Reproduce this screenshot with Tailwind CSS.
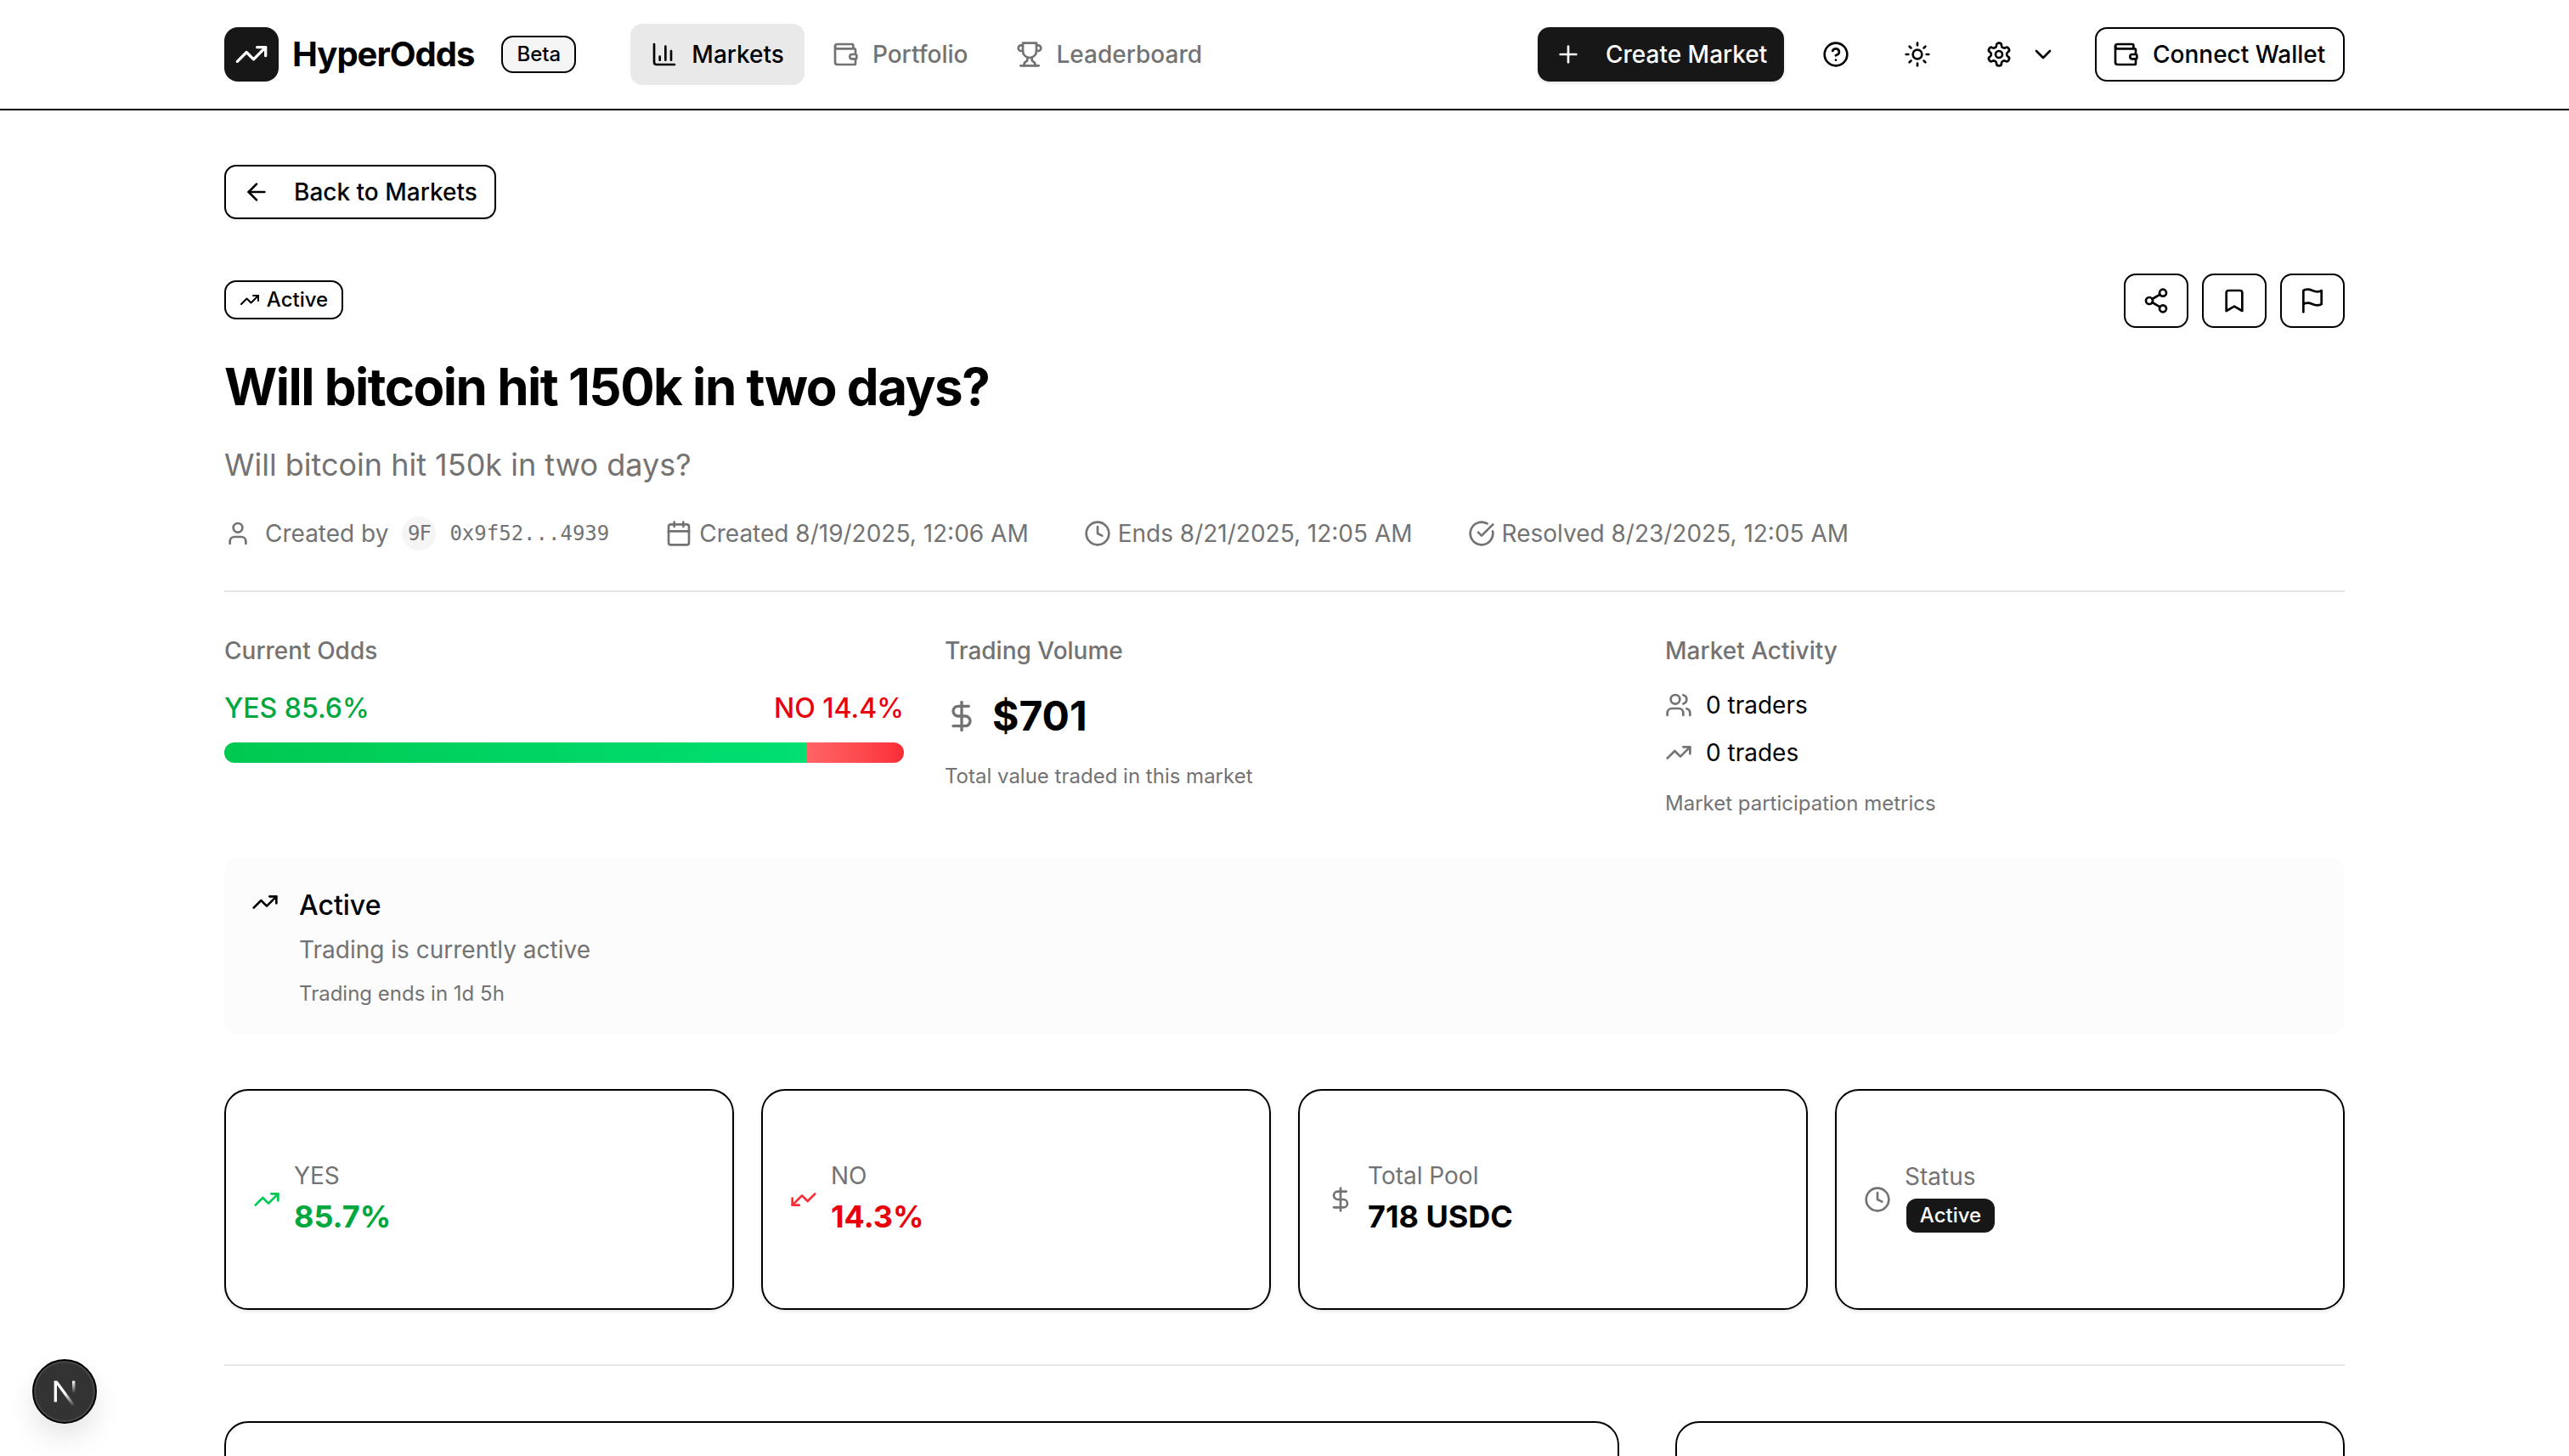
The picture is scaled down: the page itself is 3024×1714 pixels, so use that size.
<!doctype html>
<html>
<head>
<meta charset="utf-8">
<script src="https://cdn.jsdelivr.net/npm/@tailwindcss/browser@4"></script>
</head>
<body>
<div class="h-[1714px] overflow-hidden bg-white text-[28px] leading-[40px] text-black font-[Inter,sans-serif]">
  <header class="h-[130px] border-b-2 border-black">
    <div class="w-[2496px] h-[128px] mx-auto flex items-center">
      <div class="w-[64px] h-[64px] rounded-[16px] bg-[#171717] flex items-center justify-center">
        <svg class="w-[40px] h-[40px]" viewBox="0 0 24 24" fill="none" stroke="#fff" stroke-width="2" stroke-linecap="round" stroke-linejoin="round"><polyline points="22 7 13.5 15.5 8.5 10.5 2 17"/><polyline points="16 7 22 7 22 13"/></svg>
      </div>
      <span class="ml-[16px] text-[40px] leading-[56px] font-bold tracking-[-1px]">HyperOdds</span>
      <span class="ml-[32px] h-[44px] w-[88px] rounded-[14px] border-2 border-black bg-[#f5f5f5] flex items-center justify-center text-[24px] font-medium">Beta</span>
      <nav class="ml-[64px] flex items-center gap-[8px]">
        <a class="h-[72px] px-[24px] rounded-[14px] bg-[#e9e9e9] flex items-center gap-[16px] font-medium">
          <svg class="w-[32px] h-[32px]" viewBox="0 0 24 24" fill="none" stroke="currentColor" stroke-width="2" stroke-linecap="round" stroke-linejoin="round"><path d="M3 3v16a2 2 0 0 0 2 2h16"/><path d="M18 17V9"/><path d="M13 17V5"/><path d="M8 17v-3"/></svg>Markets</a>
        <a class="h-[72px] px-[24px] rounded-[14px] flex items-center gap-[16px] font-medium text-[#737373]">
          <svg class="w-[32px] h-[32px]" viewBox="0 0 24 24" fill="none" stroke="currentColor" stroke-width="2" stroke-linecap="round" stroke-linejoin="round"><path d="M19 7V4a1 1 0 0 0-1-1H5a2 2 0 0 0 0 4h15a1 1 0 0 1 1 1v4h-3a2 2 0 0 0 0 4h3a1 1 0 0 0 1-1v-2a1 1 0 0 0-1-1"/><path d="M3 5v14a2 2 0 0 0 2 2h15a1 1 0 0 0 1-1v-4"/></svg>Portfolio</a>
        <a class="h-[72px] px-[24px] rounded-[14px] flex items-center gap-[16px] font-medium text-[#737373]">
          <svg class="w-[32px] h-[32px]" viewBox="0 0 24 24" fill="none" stroke="currentColor" stroke-width="2" stroke-linecap="round" stroke-linejoin="round"><path d="M6 9H4.5a2.5 2.5 0 0 1 0-5H6"/><path d="M18 9h1.5a2.5 2.5 0 0 0 0-5H18"/><path d="M4 22h16"/><path d="M10 14.66V17c0 .55-.47.98-.97 1.21C7.85 18.75 7 20.24 7 22"/><path d="M14 14.66V17c0 .55.47.98.97 1.21C16.15 18.75 17 20.24 17 22"/><path d="M18 2H6v7a6 6 0 0 0 12 0V2Z"/></svg>Leaderboard</a>
      </nav>
      <div class="ml-auto flex items-center">
        <button class="h-[64px] w-[290px] rounded-[14px] bg-[#171717] text-white font-medium flex items-center gap-[28px] pl-[20px] shadow-[0_2px_4px_rgba(0,0,0,0.1)]">
          <svg class="w-[32px] h-[32px]" viewBox="0 0 24 24" fill="none" stroke="currentColor" stroke-width="2" stroke-linecap="round" stroke-linejoin="round"><path d="M5 12h14"/><path d="M12 5v14"/></svg>Create Market</button>
        <svg class="ml-[45px] w-[32px] h-[32px]" viewBox="0 0 24 24" fill="none" stroke="currentColor" stroke-width="2" stroke-linecap="round" stroke-linejoin="round"><circle cx="12" cy="12" r="10"/><path d="M9.09 9a3 3 0 0 1 5.83 1c0 2-3 3-3 3"/><path d="M12 17h.01"/></svg>
        <svg class="ml-[64px] w-[32px] h-[32px]" viewBox="0 0 24 24" fill="none" stroke="currentColor" stroke-width="2" stroke-linecap="round" stroke-linejoin="round"><circle cx="12" cy="12" r="4"/><path d="M12 2v2"/><path d="M12 20v2"/><path d="m4.93 4.93 1.41 1.41"/><path d="m17.66 17.66 1.41 1.41"/><path d="M2 12h2"/><path d="M20 12h2"/><path d="m6.34 17.66-1.41 1.41"/><path d="m19.07 4.93-1.41 1.41"/></svg>
        <svg class="ml-[64px] w-[32px] h-[32px]" viewBox="0 0 24 24" fill="none" stroke="currentColor" stroke-width="2" stroke-linecap="round" stroke-linejoin="round"><path d="M12.22 2h-.44a2 2 0 0 0-2 2v.18a2 2 0 0 1-1 1.73l-.43.25a2 2 0 0 1-2 0l-.15-.08a2 2 0 0 0-2.73.73l-.22.38a2 2 0 0 0 .73 2.73l.15.1a2 2 0 0 1 1 1.72v.51a2 2 0 0 1-1 1.74l-.15.09a2 2 0 0 0-.73 2.73l.22.38a2 2 0 0 0 2.73.73l.15-.08a2 2 0 0 1 2 0l.43.25a2 2 0 0 1 1 1.73V20a2 2 0 0 0 2 2h.44a2 2 0 0 0 2-2v-.18a2 2 0 0 1 1-1.73l.43-.25a2 2 0 0 1 2 0l.15.08a2 2 0 0 0 2.73-.73l.22-.39a2 2 0 0 0-.73-2.73l-.15-.08a2 2 0 0 1-1-1.74v-.5a2 2 0 0 1 1-1.74l.15-.09a2 2 0 0 0 .73-2.73l-.22-.38a2 2 0 0 0-2.73-.73l-.15.08a2 2 0 0 1-2 0l-.43-.25a2 2 0 0 1-1-1.73V4a2 2 0 0 0-2-2z"/><circle cx="12" cy="12" r="3"/></svg>
        <svg class="ml-[20px] w-[32px] h-[32px]" viewBox="0 0 24 24" fill="none" stroke="currentColor" stroke-width="2" stroke-linecap="round" stroke-linejoin="round"><path d="m6 9 6 6 6-6"/></svg>
        <button class="ml-[45px] h-[64px] w-[294px] rounded-[14px] border-2 border-black font-medium flex items-center gap-[16px] pl-[18px] shadow-[0_2px_4px_rgba(0,0,0,0.06)]">
          <svg class="w-[32px] h-[32px]" viewBox="0 0 24 24" fill="none" stroke="currentColor" stroke-width="2" stroke-linecap="round" stroke-linejoin="round"><path d="M19 7V4a1 1 0 0 0-1-1H5a2 2 0 0 0 0 4h15a1 1 0 0 1 1 1v4h-3a2 2 0 0 0 0 4h3a1 1 0 0 0 1-1v-2a1 1 0 0 0-1-1"/><path d="M3 5v14a2 2 0 0 0 2 2h15a1 1 0 0 0 1-1v-4"/></svg>Connect Wallet</button>
      </div>
    </div>
  </header>

  <main class="w-[2496px] mx-auto pt-[64px]">
    <button class="h-[64px] w-[320px] rounded-[14px] border-2 border-black font-medium flex items-center gap-[28px] pl-[20px] shadow-[0_2px_4px_rgba(0,0,0,0.06)]">
      <svg class="w-[32px] h-[32px]" viewBox="0 0 24 24" fill="none" stroke="currentColor" stroke-width="2" stroke-linecap="round" stroke-linejoin="round"><path d="m12 19-7-7 7-7"/><path d="M19 12H5"/></svg>Back to Markets</button>

    <div class="mt-[64px] flex justify-between items-start">
      <div class="mt-[8px] h-[46px] w-[140px] rounded-[14px] border-2 border-black flex items-center justify-center gap-[8px] text-[24px] leading-[46px] font-medium">
        <svg class="w-[24px] h-[24px]" viewBox="0 0 24 24" fill="none" stroke="currentColor" stroke-width="2" stroke-linecap="round" stroke-linejoin="round"><polyline points="22 7 13.5 15.5 8.5 10.5 2 17"/><polyline points="16 7 22 7 22 13"/></svg>Active</div>
      <div class="flex gap-[16px]">
        <button class="w-[76px] h-[64px] rounded-[14px] border-2 border-black flex items-center justify-center"><svg class="w-[32px] h-[32px]" viewBox="0 0 24 24" fill="none" stroke="currentColor" stroke-width="2" stroke-linecap="round" stroke-linejoin="round"><circle cx="18" cy="5" r="3"/><circle cx="6" cy="12" r="3"/><circle cx="18" cy="19" r="3"/><line x1="8.59" x2="15.42" y1="13.51" y2="17.49"/><line x1="15.41" x2="8.59" y1="6.51" y2="10.49"/></svg></button>
        <button class="w-[76px] h-[64px] rounded-[14px] border-2 border-black flex items-center justify-center"><svg class="w-[32px] h-[32px]" viewBox="0 0 24 24" fill="none" stroke="currentColor" stroke-width="2" stroke-linecap="round" stroke-linejoin="round"><path d="m19 21-7-4-7 4V5a2 2 0 0 1 2-2h10a2 2 0 0 1 2 2v16z"/></svg></button>
        <button class="w-[76px] h-[64px] rounded-[14px] border-2 border-black flex items-center justify-center"><svg class="w-[32px] h-[32px]" viewBox="0 0 24 24" fill="none" stroke="currentColor" stroke-width="2" stroke-linecap="round" stroke-linejoin="round"><path d="M4 15s1-1 4-1 5 2 8 2 4-1 4-1V3s-1 1-4 1-5-2-8-2-4 1-4 1z"/><line x1="4" x2="4" y1="22" y2="15"/></svg></button>
      </div>
    </div>

    <h1 class="mt-[33px] text-[60px] leading-[72px] font-bold tracking-[-1.5px]">Will bitcoin hit 150k in two days?</h1>
    <p class="mt-[28px] text-[36px] leading-[56px] text-[#737373]">Will bitcoin hit 150k in two days?</p>

    <div class="mt-[33px] h-[40px] flex items-center text-[#737373]">
      <svg class="w-[32px] h-[32px]" viewBox="0 0 24 24" fill="none" stroke="currentColor" stroke-width="2" stroke-linecap="round" stroke-linejoin="round"><path d="M19 21v-2a4 4 0 0 0-4-4H9a4 4 0 0 0-4 4v2"/><circle cx="12" cy="7" r="4"/></svg>
      <span class="ml-[16px]">Created by</span>
      <span class="ml-[16px] w-[40px] h-[40px] rounded-full bg-[#f5f5f5] flex items-center justify-center text-[24px] font-['DejaVu_Sans_Mono',monospace] tracking-[-1px]">9F</span>
      <span class="ml-[16px] text-[24px] font-['DejaVu_Sans_Mono',monospace]">0x9f52...4939</span>
      <svg class="ml-[66px] w-[32px] h-[32px]" viewBox="0 0 24 24" fill="none" stroke="currentColor" stroke-width="2" stroke-linecap="round" stroke-linejoin="round"><path d="M8 2v4"/><path d="M16 2v4"/><rect width="18" height="18" x="3" y="4" rx="2"/><path d="M3 10h18"/></svg>
      <span class="ml-[8px]">Created 8/19/2025, 12:06 AM</span>
      <svg class="ml-[65px] w-[32px] h-[32px]" viewBox="0 0 24 24" fill="none" stroke="currentColor" stroke-width="2" stroke-linecap="round" stroke-linejoin="round"><circle cx="12" cy="12" r="10"/><polyline points="12 6 12 12 16 14"/></svg>
      <span class="ml-[8px]">Ends 8/21/2025, 12:05 AM</span>
      <svg class="ml-[65px] w-[32px] h-[32px]" viewBox="0 0 24 24" fill="none" stroke="currentColor" stroke-width="2" stroke-linecap="round" stroke-linejoin="round"><path d="M21.801 10A10 10 0 1 1 17 3.335"/><path d="m9 11 3 3L22 4"/></svg>
      <span class="ml-[8px]">Resolved 8/23/2025, 12:05 AM</span>
    </div>

    <div class="mt-[47px] h-[2px] bg-[#e5e5e5]"></div>

    <div class="mt-[49px] grid grid-cols-3 gap-[48px]">
      <div>
        <div class="text-[#737373] font-medium">Current Odds</div>
        <div class="mt-[28px] flex justify-between text-[32px] leading-[40px] font-medium"><span class="text-[#00a63e]">YES 85.6%</span><span class="text-[#e7000b]">NO 14.4%</span></div>
        <div class="mt-[20px] h-[24px] rounded-full overflow-hidden flex">
          <div class="w-[85.6%] bg-linear-to-r from-green-500 to-green-400"></div>
          <div class="flex-1 bg-linear-to-r from-red-400 to-red-500"></div>
        </div>
      </div>
      <div>
        <div class="text-[#737373] font-medium">Trading Volume</div>
        <div class="mt-[25px] flex items-center gap-[16px]">
          <svg class="w-[40px] h-[40px] text-[#737373]" viewBox="0 0 24 24" fill="none" stroke="currentColor" stroke-width="2" stroke-linecap="round" stroke-linejoin="round"><line x1="12" x2="12" y1="2" y2="22"/><path d="M17 5H9.5a3.5 3.5 0 0 0 0 7h5a3.5 3.5 0 0 1 0 7H6"/></svg>
          <span class="text-[48px] leading-[64px] font-bold">$701</span>
        </div>
        <div class="mt-[23px] text-[24px] leading-[32px] text-[#737373]">Total value traded in this market</div>
      </div>
      <div>
        <div class="text-[#737373] font-medium">Market Activity</div>
        <div class="mt-[24px] flex items-center gap-[16px]">
          <svg class="w-[32px] h-[32px] text-[#737373]" viewBox="0 0 24 24" fill="none" stroke="currentColor" stroke-width="2" stroke-linecap="round" stroke-linejoin="round"><path d="M16 21v-2a4 4 0 0 0-4-4H6a4 4 0 0 0-4 4v2"/><circle cx="9" cy="7" r="4"/><path d="M22 21v-2a4 4 0 0 0-3-3.87"/><path d="M16 3.13a4 4 0 0 1 0 7.75"/></svg>
          <span>0 traders</span>
        </div>
        <div class="mt-[16px] flex items-center gap-[16px]">
          <svg class="w-[32px] h-[32px] text-[#737373]" viewBox="0 0 24 24" fill="none" stroke="currentColor" stroke-width="2" stroke-linecap="round" stroke-linejoin="round"><polyline points="22 7 13.5 15.5 8.5 10.5 2 17"/><polyline points="16 7 22 7 22 13"/></svg>
          <span>0 trades</span>
        </div>
        <div class="mt-[24px] text-[24px] leading-[32px] text-[#737373]">Market participation metrics</div>
      </div>
    </div>

    <div class="mt-[48px] h-[208px] rounded-[16px] bg-[#fcfcfc] flex gap-[24px] pl-[32px] pt-[32px]">
      <svg class="w-[32px] h-[32px] mt-[4px]" viewBox="0 0 24 24" fill="none" stroke="currentColor" stroke-width="2" stroke-linecap="round" stroke-linejoin="round"><polyline points="22 7 13.5 15.5 8.5 10.5 2 17"/><polyline points="16 7 22 7 22 13"/></svg>
      <div>
        <div class="mt-[2px] text-[32px] leading-[44px] font-medium">Active</div>
        <div class="mt-[6px] leading-[48px] text-[#737373]">Trading is currently active</div>
        <div class="mt-[12px] text-[24px] leading-[32px] text-[#737373]">Trading ends in 1d 5h</div>
      </div>
    </div>

    <div class="mt-[64px] grid grid-cols-4 gap-[32px]">
      <div class="h-[260px] rounded-[28px] border-2 border-black px-[32px] flex items-center gap-[16px] shadow-[0_2px_4px_rgba(0,0,0,0.1)]">
        <svg class="w-[32px] h-[32px] text-green-500" viewBox="0 0 24 24" fill="none" stroke="currentColor" stroke-width="2" stroke-linecap="round" stroke-linejoin="round"><polyline points="22 7 13.5 15.5 8.5 10.5 2 17"/><polyline points="16 7 22 7 22 13"/></svg>
        <div><div class="text-[#737373]">YES</div><div class="text-[36px] leading-[56px] font-bold text-[#00a63e]">85.7%</div></div>
      </div>
      <div class="h-[260px] rounded-[28px] border-2 border-black px-[32px] flex items-center gap-[16px] shadow-[0_2px_4px_rgba(0,0,0,0.1)]">
        <svg class="w-[32px] h-[32px] text-red-500" viewBox="0 0 24 24" fill="none" stroke="currentColor" stroke-width="2" stroke-linecap="round" stroke-linejoin="round"><polyline points="2 17 10.5 8.5 15.5 13.5 22 7"/><polyline points="8 17 2 17 2 11"/></svg>
        <div><div class="text-[#737373]">NO</div><div class="text-[36px] leading-[56px] font-bold text-[#e7000b]">14.3%</div></div>
      </div>
      <div class="h-[260px] rounded-[28px] border-2 border-black px-[32px] flex items-center gap-[16px] shadow-[0_2px_4px_rgba(0,0,0,0.1)]">
        <svg class="w-[32px] h-[32px] text-[#737373]" viewBox="0 0 24 24" fill="none" stroke="currentColor" stroke-width="2" stroke-linecap="round" stroke-linejoin="round"><line x1="12" x2="12" y1="2" y2="22"/><path d="M17 5H9.5a3.5 3.5 0 0 0 0 7h5a3.5 3.5 0 0 1 0 7H6"/></svg>
        <div><div class="text-[#737373]">Total Pool</div><div class="text-[36px] leading-[56px] font-bold">718 USDC</div></div>
      </div>
      <div class="h-[260px] rounded-[28px] border-2 border-black px-[32px] flex items-center gap-[16px] shadow-[0_2px_4px_rgba(0,0,0,0.1)]">
        <svg class="w-[32px] h-[32px] text-[#737373]" viewBox="0 0 24 24" fill="none" stroke="currentColor" stroke-width="2" stroke-linecap="round" stroke-linejoin="round"><circle cx="12" cy="12" r="10"/><polyline points="12 6 12 12 16 14"/></svg>
        <div class="mb-[8px]"><div class="text-[#737373]">Status</div><div class="mt-[6px] ml-[2px] w-[104px] h-[40px] rounded-[12px] bg-[#171717] text-white text-[24px] leading-[40px] font-medium text-center">Active</div></div>
      </div>
    </div>

    <div class="mt-[64px] h-[2px] bg-[#e5e5e5]"></div>

    <div class="mt-[65px] grid grid-cols-[1642px_1fr] gap-[66px]">
      <div class="h-[400px] rounded-[28px] border-2 border-black"></div>
      <div class="h-[400px] rounded-[28px] border-2 border-black"></div>
    </div>
  </main>

  <div class="fixed left-[38px] top-[1600px] w-[76px] h-[76px] rounded-full bg-[#333] border-2 border-black flex items-center justify-center shadow-[0_16px_32px_rgba(0,0,0,0.1),inset_0_0_0_2px_rgba(255,255,255,0.1)]">
    <svg class="w-[36px] h-[36px]" viewBox="0 0 32 32" fill="none">
      <defs>
        <linearGradient id="n1" x1="0" y1="0" x2="1" y2="1"><stop offset="0.5" stop-color="#fff"/><stop offset="1" stop-color="#fff" stop-opacity="0"/></linearGradient>
        <linearGradient id="n2" x1="0" y1="0" x2="0" y2="1"><stop offset="0" stop-color="#fff"/><stop offset="0.8" stop-color="#fff" stop-opacity="0"/></linearGradient>
      </defs>
      <path d="M5 5h3v22H5z" fill="#fff"/>
      <path d="M5 5h3.6l18 24.5-2.6 1.5z" fill="url(#n1)"/>
      <path d="M24 5h3v16h-3z" fill="url(#n2)"/>
    </svg>
  </div>
</div>
</body>
</html>
